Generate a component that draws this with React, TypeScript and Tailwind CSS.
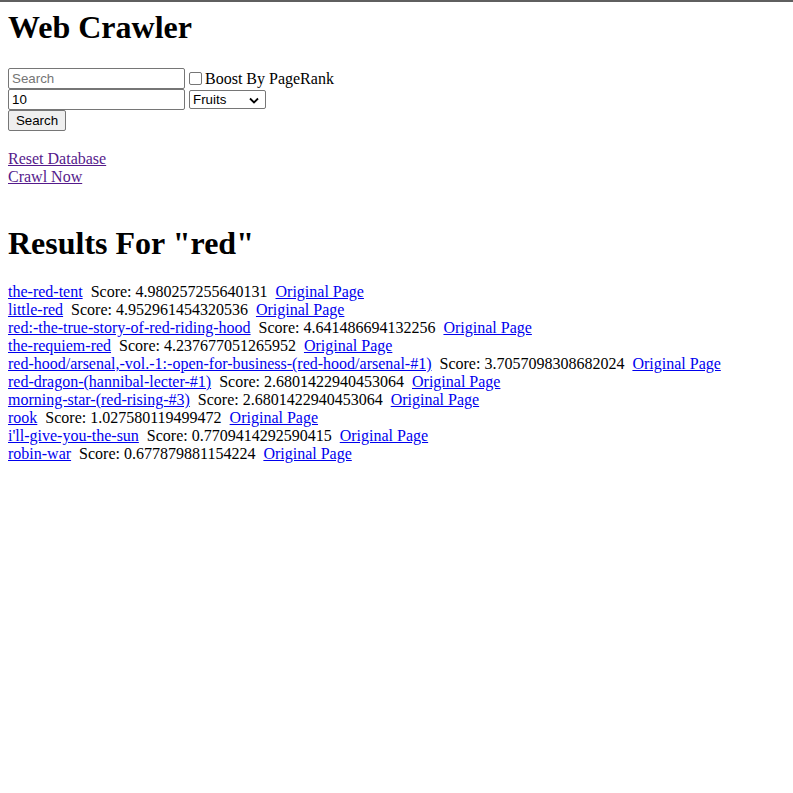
import React from "react";

const results: [string, string][] = [
  ["the-red-tent", "4.980257255640131"],
  ["little-red", "4.952961454320536"],
  ["red:-the-true-story-of-red-riding-hood", "4.641486694132256"],
  ["the-requiem-red", "4.237677051265952"],
  ["red-hood/arsenal,-vol.-1:-open-for-business-(red-hood/arsenal-#1)", "3.7057098308682024"],
  ["red-dragon-(hannibal-lecter-#1)", "2.6801422940453064"],
  ["morning-star-(red-rising-#3)", "2.6801422940453064"],
  ["rook", "1.027580119499472"],
  ["i'll-give-you-the-sun", "0.7709414292590415"],
  ["robin-war", "0.677879881154224"],
];

export default function App() {
  return (
    <div className="min-h-[793px] bg-white border-t-2 border-[#5f5f5f] px-2 font-['Liberation_Serif',_'Times_New_Roman',serif] text-[16px] leading-[18px] text-black">
      <h1 className="mt-[7px] text-[32px] leading-[36px] font-bold">Web Crawler</h1>
      <form className="mt-[23px] flex flex-col font-['Liberation_Sans',Arial,sans-serif] text-[13.33px]">
        <div className="flex items-center h-[21px]">
          <input
            type="text"
            placeholder="Search"
            className="w-[177px] h-[21px] border border-[#767676] rounded-[2px] px-[3px] text-[13.33px] placeholder:text-[#757575] outline-none"
          />
          <input type="checkbox" className="ml-[4px] w-[13px] h-[13px] appearance-none border border-[#767676] rounded-[2px] bg-white" />
          <span className="ml-[3px] font-['Liberation_Serif',_'Times_New_Roman',serif] text-[16px] leading-[18px]">Boost By PageRank</span>
        </div>
        <div className="flex items-center h-[21px]">
          <input
            type="text"
            defaultValue="10"
            className="w-[177px] h-[21px] border border-[#767676] rounded-[2px] px-[3px] text-[13.33px] outline-none"
          />
          <div className="ml-[4px] relative w-[77px] h-[19px] border border-[#767676] rounded-[2px] flex items-center pl-[3px] text-[13.33px] bg-white">
            <span>Fruits</span>
            <svg className="absolute right-[6px] top-[6px]" width="10" height="7" viewBox="0 0 10 7">
              <path d="M1 1.5 L5 5.5 L9 1.5" fill="none" stroke="#000" strokeWidth="1.8" />
            </svg>
          </div>
        </div>
        <div className="flex">
          <button
            type="button"
            className="w-[58px] h-[21px] border border-[#767676] rounded-[2px] bg-[#efefef] text-[13.33px] leading-[17px] text-black"
          >
            Search
          </button>
        </div>
      </form>
      <div className="mt-[19px] flex flex-col items-start">
        <a href="#" className="underline text-[#551a8b]">Reset Database</a>
        <a href="#" className="underline text-[#551a8b]">Crawl Now</a>
      </div>
      <h1 className="mt-[39px] text-[32px] leading-[36px] font-bold">Results For "red"</h1>
      <div className="mt-[22px] flex flex-col">
        {results.map(([title, score]) => (
          <div key={title} className="whitespace-pre">
            <a href="#" className="underline text-[#0000ee]">{title}</a>
            <span>{"  Score: " + score + "  "}</span>
            <a href="#" className="underline text-[#0000ee]">Original Page</a>
          </div>
        ))}
      </div>
    </div>
  );
}
